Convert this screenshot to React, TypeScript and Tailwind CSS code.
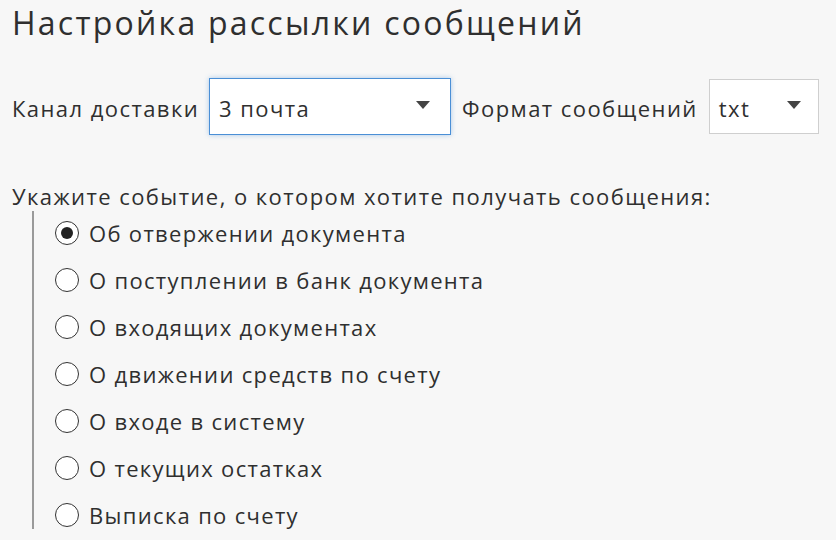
import React from "react";

const EVENTS = [
  { label: "Об отвержении документа", checked: true },
  { label: "О поступлении в банк документа", checked: false },
  { label: "О входящих документах", checked: false },
  { label: "О движении средств по счету", checked: false },
  { label: "О входе в систему", checked: false },
  { label: "О текущих остатках", checked: false },
  { label: "Выписка по счету", checked: false },
];

const Caret: React.FC = () => (
  <svg width="14" height="8" viewBox="0 0 14 8" className="mb-[4px] shrink-0">
    <path d="M0 0h14L7 8z" fill="#444" />
  </svg>
);

const Radio: React.FC<{ checked: boolean }> = ({ checked }) => (
  <span className="flex h-[24px] w-[24px] shrink-0 items-center justify-center rounded-full border-[1.5px] border-[#333] bg-white">
    {checked && <span className="h-[12px] w-[12px] rounded-full bg-[#222]" />}
  </span>
);

const App: React.FC = () => {
  return (
    <div
      className="h-[540px] w-[836px] overflow-hidden bg-[#f7f7f7] px-[12px] text-[#2f2f2f]"
      style={{ fontFamily: '"Open Sans", "Noto Sans", sans-serif' }}
    >
      <h1 className="pt-[1px] text-[32px] leading-[44px] tracking-[0.07em]">
        Настройка рассылки сообщений
      </h1>

      <div className="mt-[33px] flex items-center text-[22px] tracking-[0.065em]">
        <span className="pt-[4px]">Канал доставки</span>
        <div className="ml-[10px] flex h-[57px] w-[242px] shrink-0 items-center justify-between border border-[#4a8fd6] bg-white pl-[9px] pr-[20px] shadow-[0_0_5px_rgba(74,143,214,0.45)]">
          <span className="pt-[4px]">3 почта</span>
          <Caret />
        </div>
        <span className="ml-[11px] pt-[4px]">Формат сообщений</span>
        <div className="ml-[11px] flex h-[55px] w-[110px] shrink-0 items-center justify-between border border-[#cfcfcf] bg-white pl-[9px] pr-[17px]">
          <span className="pt-[4px]">txt</span>
          <Caret />
        </div>
      </div>

      <p className="mt-[46px] text-[22px] leading-[30px] tracking-[0.065em]">
        Укажите событие, о котором хотите получать сообщения:
      </p>

      <div className="ml-[20px] flex flex-col gap-[21px] border-l-2 border-[#9a9a9a] pb-[1px] pt-[9px]">
        {EVENTS.map((event, index) => (
          <label
            key={index}
            className="flex h-[26px] items-center gap-[10px] pl-[21px] text-[22px] tracking-[0.06em]"
          >
            <Radio checked={event.checked} />
            <span>{event.label}</span>
          </label>
        ))}
      </div>
    </div>
  );
};

export default App;
